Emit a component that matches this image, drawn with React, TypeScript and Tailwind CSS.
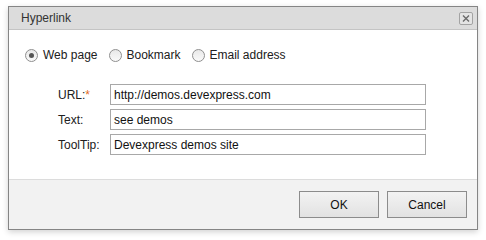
import React from "react";

function Radio({ checked, label }: { checked?: boolean; label: string }) {
  return (
    <label className="flex items-center gap-[5px]">
      <span className="flex h-[13px] w-[13px] items-center justify-center rounded-full border border-[#8f8f8f] bg-gradient-to-b from-[#e8e8e8] to-[#fafafa]">
        {checked && <span className="h-[5px] w-[5px] rounded-full bg-[#555]" />}
      </span>
      <span>{label}</span>
    </label>
  );
}

function Row({ label, value, required }: { label: string; value: string; required?: boolean }) {
  return (
    <div className="flex items-center">
      <div className="w-[52px]">
        {label}
        {required && <span className="text-[#e26b1d]">*</span>}
      </div>
      <div className="flex h-[21px] w-[316px] items-center border border-[#a8a8a8] bg-white pl-[3px] text-[#111]">
        {value}
      </div>
    </div>
  );
}

export default function App() {
  return (
    <div
      className="h-[240px] w-[486px] bg-white pl-[8px] pt-[6px] text-[12px] text-[#202020]"
      style={{ fontFamily: '"Liberation Sans", Arial, sans-serif' }}
    >
      <div className="flex h-[224px] w-[470px] flex-col border border-[#858585] shadow-[0_2px_6px_rgba(0,0,0,0.18)]">
        <div className="flex h-[23px] items-center justify-between border-b border-[#c4c4c4] bg-[#dcdcdc] pl-[12px] pr-[4px] text-[#333]">
          <span>Hyperlink</span>
          <span className="flex h-[13px] w-[14px] items-center justify-center rounded-[2px] border border-[#a3a3a3] bg-[#e4e4e4]">
            <svg width="8" height="7" viewBox="0 0 8 7">
              <path d="M1 0.5 L7 6.5 M7 0.5 L1 6.5" stroke="#6a6a6a" strokeWidth="1.4" />
            </svg>
          </span>
        </div>
        <div className="flex flex-1 flex-col bg-white">
          <div className="flex items-center gap-[11px] pl-[16px] pt-[16px]">
            <Radio checked label="Web page" />
            <Radio label="Bookmark" />
            <Radio label="Email address" />
          </div>
          <div className="flex flex-col gap-[4px] pl-[49px] pt-[20px]">
            <Row label="URL:" required value="http://demos.devexpress.com" />
            <Row label="Text:" value="see demos" />
            <Row label="ToolTip:" value="Devexpress demos site" />
          </div>
        </div>
        <div className="flex h-[50px] items-center justify-end gap-[8px] border-t border-[#dcdcdc] bg-[#f2f2f2] pr-[10px]">
          <button className="h-[27px] w-[80px] border border-[#8c8c8c] bg-gradient-to-b from-[#f3f3f3] to-[#e2e2e2] text-[#111]">
            OK
          </button>
          <button className="h-[27px] w-[80px] border border-[#8c8c8c] bg-gradient-to-b from-[#f3f3f3] to-[#e2e2e2] text-[#111]">
            Cancel
          </button>
        </div>
      </div>
    </div>
  );
}
